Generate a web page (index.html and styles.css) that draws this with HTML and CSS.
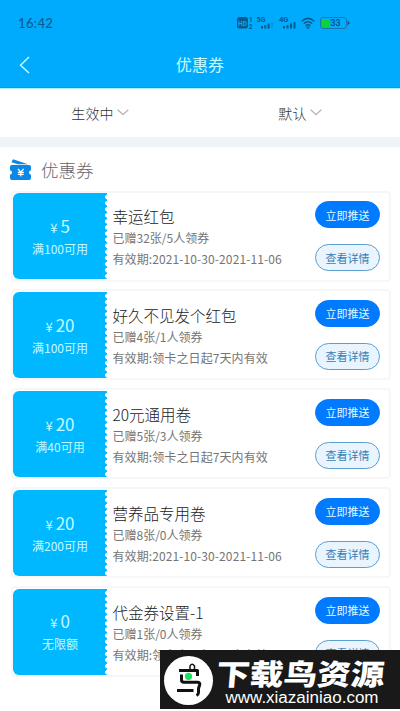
FILE: index.html
```html
<!DOCTYPE html>
<html lang="zh-CN">
<head>
<meta charset="utf-8">
<title>优惠券</title>
<link rel="stylesheet" href="styles.css">
</head>
<body>
<header class="top">
  <div class="status">
    <span class="time">16:42</span>
    <svg class="status-icons" width="116" height="16" viewBox="0 0 116 16">
      <g fill="#075b91">
        <rect x="1" y="2" width="11" height="11.500" rx="2.500"/>
        <text x="2" y="10.700" font-size="8" fill="#00abfe" font-weight="700" textLength="9" lengthAdjust="spacingAndGlyphs">HD</text>
        <text x="13" y="6.500" font-size="6.500" font-weight="700">1</text>
        <text x="12.700" y="13.500" font-size="6.500" font-weight="700">2</text>
        <text x="20.500" y="7.300" font-size="7.500" font-weight="700" textLength="9" lengthAdjust="spacingAndGlyphs">5G</text>
        <path d="M25 11h2v2.500h-2zM28.300 10h2v3.500h-2zM31.600 8.500h2v5h-2z"/>
        <path d="M35.200 7h1.500v6.500h-1.500z" opacity=".3"/>
        <text x="43" y="7.300" font-size="7.500" font-weight="700" textLength="9.500" lengthAdjust="spacingAndGlyphs">4G</text>
        <path d="M47 11h2v2.500h-2zM50.500 10h2v3.500h-2zM54 8.500h2v5h-2zM57.500 7h2v6.500h-2z"/>
      </g>
      <g fill="none" stroke="#075b91" stroke-width="1.500">
        <path d="M65.700 6.200q6.300-5.600 12.600 0M67.700 8.500q4.300-3.600 8.600 0M69.700 10.700q2.300-1.900 4.600 0"/>
        <path d="M71.200 12.200h1.600l-.8 .9z"/>
        <rect x="84.500" y="2.500" width="26" height="11" rx="2.500" stroke-width="1" stroke="#1a78ae"/>
      </g>
      <path d="M86 4h7v8h-7z" fill="#08d53c"/>
      <path d="M111.500 5.500l2.500 2.500-2.500 2.500z" fill="#075b91"/>
      <text x="94.500" y="10.900" font-size="8.500" font-weight="500" fill="#064f80" textLength="10" lengthAdjust="spacingAndGlyphs">33</text>
    </svg>
  </div>
  <div class="nav">
    <svg class="back" width="12" height="18" viewBox="0 0 12 18"><path d="M10 1L1.500 9.200 10 17" fill="none" stroke="#c9fbff" stroke-width="1.400"/></svg>
    <h1>优惠券</h1>
  </div>
</header>
<nav class="filters">
  <div class="filter">生效中<svg width="12" height="7" viewBox="0 0 12 7"><path d="M.7 .8L6 5.700 11.300 .8"/></svg></div>
  <div class="filter">默认<svg width="12" height="7" viewBox="0 0 12 7"><path d="M.7 .8L6 5.700 11.300 .8"/></svg></div>
</nav>
<main>
  <div class="section">
    <svg width="23" height="22" viewBox="0 0 23 22">
      <path d="M2.500 3.300L4 .3 19 5.200H9z" fill="#0b88e6"/>
      <path d="M2.500 6H20q2 0 2 2v3.200q-2 .3-2 2.300t2 2.300V19q0 2-2 2H3q-2 0-2-2v-3.200q2-.3 2-2.300t-2-2.300V8q0-2 1.500-2z" fill="#0b88e6"/>
      <path d="M9 10l2.800 3.200 2.800-3.200M8.800 13.300h6M8.800 15.300h6M11.800 13v4.500" fill="none" stroke="#fff" stroke-width="1.200"/>
    </svg>
    <h2>优惠券</h2>
  </div>
  <div class="list">
    <article class="card">
      <div class="value"><div class="amount"><small>¥</small>5</div><div>满100可用</div></div>
      <div class="info"><h3>幸运红包</h3><p>已赠32张/5人领券</p><p class="date">有效期:2021-10-30-2021-11-06</p></div>
      <div class="actions"><button class="push">立即推送</button><button>查看详情</button></div>
    </article>
    <article class="card">
      <div class="value"><div class="amount"><small>¥</small>20</div><div>满100可用</div></div>
      <div class="info"><h3>好久不见发个红包</h3><p>已赠4张/1人领券</p><p class="date">有效期:领卡之日起7天内有效</p></div>
      <div class="actions"><button class="push">立即推送</button><button>查看详情</button></div>
    </article>
    <article class="card">
      <div class="value"><div class="amount"><small>¥</small>20</div><div>满40可用</div></div>
      <div class="info"><h3>20元通用卷</h3><p>已赠5张/3人领券</p><p class="date">有效期:领卡之日起7天内有效</p></div>
      <div class="actions"><button class="push">立即推送</button><button>查看详情</button></div>
    </article>
    <article class="card">
      <div class="value"><div class="amount"><small>¥</small>20</div><div>满200可用</div></div>
      <div class="info"><h3>营养品专用卷</h3><p>已赠8张/0人领券</p><p class="date">有效期:2021-10-30-2021-11-06</p></div>
      <div class="actions"><button class="push">立即推送</button><button>查看详情</button></div>
    </article>
    <article class="card">
      <div class="value"><div class="amount"><small>¥</small>0</div><div>无限额</div></div>
      <div class="info"><h3>代金券设置-1</h3><p>已赠1张/0人领券</p><p class="date">有效期:领卡之日起7天内有效</p></div>
      <div class="actions"><button class="push">立即推送</button><button>查看详情</button></div>
    </article>
  </div>
</main>
<aside class="banner">
  <svg width="240" height="59" viewBox="0 0 240 59">
    <circle cx="28.500" cy="30.500" r="24.500" fill="#fff"/>
    <g fill="none" stroke="#111" stroke-width="3" stroke-linejoin="round">
      <path d="M30 19.500v-3.500q2-3.500 4.500 0v3.500" stroke-width="1.500"/>
      <path d="M37.500 26V20.500H19"/>
      <path d="M21.500 24.500V30q0 2.300 2.500 2.300h13.500q2.500 0 2.300 2.200l-1.300 4v4q0 2-2 3"/>
      <path d="M17 40.500H33.500"/>
    </g>
    <circle cx="28.500" cy="26.300" r="3.600" fill="#1fe05a"/>
    <text class="banner-title" transform="translate(55.500 35) skewX(-5)" textLength="168" lengthAdjust="spacingAndGlyphs">下载鸟资源</text>
    <text class="banner-url" x="65.500" y="52.500" textLength="153" lengthAdjust="spacingAndGlyphs">www.xiazainiao.com</text>
  </svg>
</aside>
</body>
</html>
```
FILE: styles.css
```css
* { box-sizing: border-box; }
body, h1, h2, h3, p { margin: 0; font-weight: 300; }
body {
  width: 400px;
  height: 711px;
  overflow: hidden;
  position: relative;
  background: #fff;
  font-family: "Noto Sans CJK SC", sans-serif;
}
svg { flex: none; display: block; }
.top {
  height: 89px;
  background: #00abfe;
  border-bottom: 1px solid #afeeff;
  box-shadow: inset 0 -1px #119bd7;
}
.status {
  height: 46px;
  padding: 15px 48px 0 18px;
  display: flex;
  justify-content: space-between;
}
.time {
  font: 500 13px/17px Lato, sans-serif;
  letter-spacing: .35px;
  color: #075b91;
}
.status-icons { font-family: Roboto, sans-serif; }
.nav {
  height: 38px;
  display: grid;
  grid-template-columns: 40px 1fr 40px;
  align-items: center;
}
.back { margin-left: 19px; }
.nav h1 {
  padding-bottom: 2px;
  text-align: center;
  font-size: 16px;
  font-weight: 400;
  line-height: 24px;
  letter-spacing: .2px;
  color: #c9fbff;
}
.filters {
  height: 58px;
  padding-bottom: 1px;
  border-bottom: 10px solid #edf3f7;
  display: grid;
  grid-template-columns: 1fr 1fr;
}
.filter {
  display: flex;
  align-items: center;
  justify-content: center;
  gap: 3px;
  font-size: 14px;
  letter-spacing: .2px;
  color: #333;
}
.filter svg { fill: none; stroke: #b4b4b8; stroke-width: 1.300; }
.section {
  height: 43px;
  padding: 2px 0 0 9px;
  display: flex;
  align-items: center;
  gap: 9px;
}
.section h2 { font-size: 17.500px; line-height: 26px; color: #65656c; }
.list {
  padding: .5px 9px 0 11px;
  display: grid;
  gap: 7.900px;
}
.card {
  height: 91px;
  border: 2px solid #f7f7f7;
  border-radius: 4px;
  display: grid;
  grid-template-columns: 94px 1fr 65px;
  padding-right: 9px;
  color: #757575;
}
.value {
  height: 86px;
  margin-top: .9px;
  padding-top: 20.500px;
  border-radius: 6px 0 0 6px;
  background: radial-gradient(circle at 3px 3px, #fff 1.800px, transparent 2.300px) right -2.500px top 1px / 6px 6.100px repeat-y, #00b8ff;
  text-align: center;
  font-size: 12px;
  font-weight: 400;
  line-height: 18px;
  color: #c4faff;
}
.amount { font-size: 17px; line-height: 24px; }
.amount small { font-size: 13px; margin-right: 3px; }
.info { padding: 11.500px 0 0 5.500px; white-space: nowrap; }
.info h3 { font-size: 15.500px; line-height: 24px; color: #222; }
.info p { font-size: 12px; font-weight: 400; line-height: 20px; }
.info .date { letter-spacing: .1px; line-height: 22px; }
.actions { padding-top: 8.500px; display: flex; flex-direction: column; gap: 16px; }
.actions button {
  height: 27px;
  padding: 0;
  border: 1px solid #5a9fce;
  border-radius: 14px;
  background: #e9f4ff;
  font: 11px/22px "Noto Sans CJK SC", sans-serif;
  color: #347fb5;
}
.actions .push { border-color: #007aff; background: #007aff; color: #e5f8ff; }
.banner {
  position: absolute;
  left: 160px;
  top: 650px;
  width: 240px;
  height: 59px;
  background: #191919;
}
.banner-title { font-size: 29px; font-weight: 900; fill: #fff; }
.banner-url { font: 16px "Liberation Sans", sans-serif; fill: #fff; }
```
